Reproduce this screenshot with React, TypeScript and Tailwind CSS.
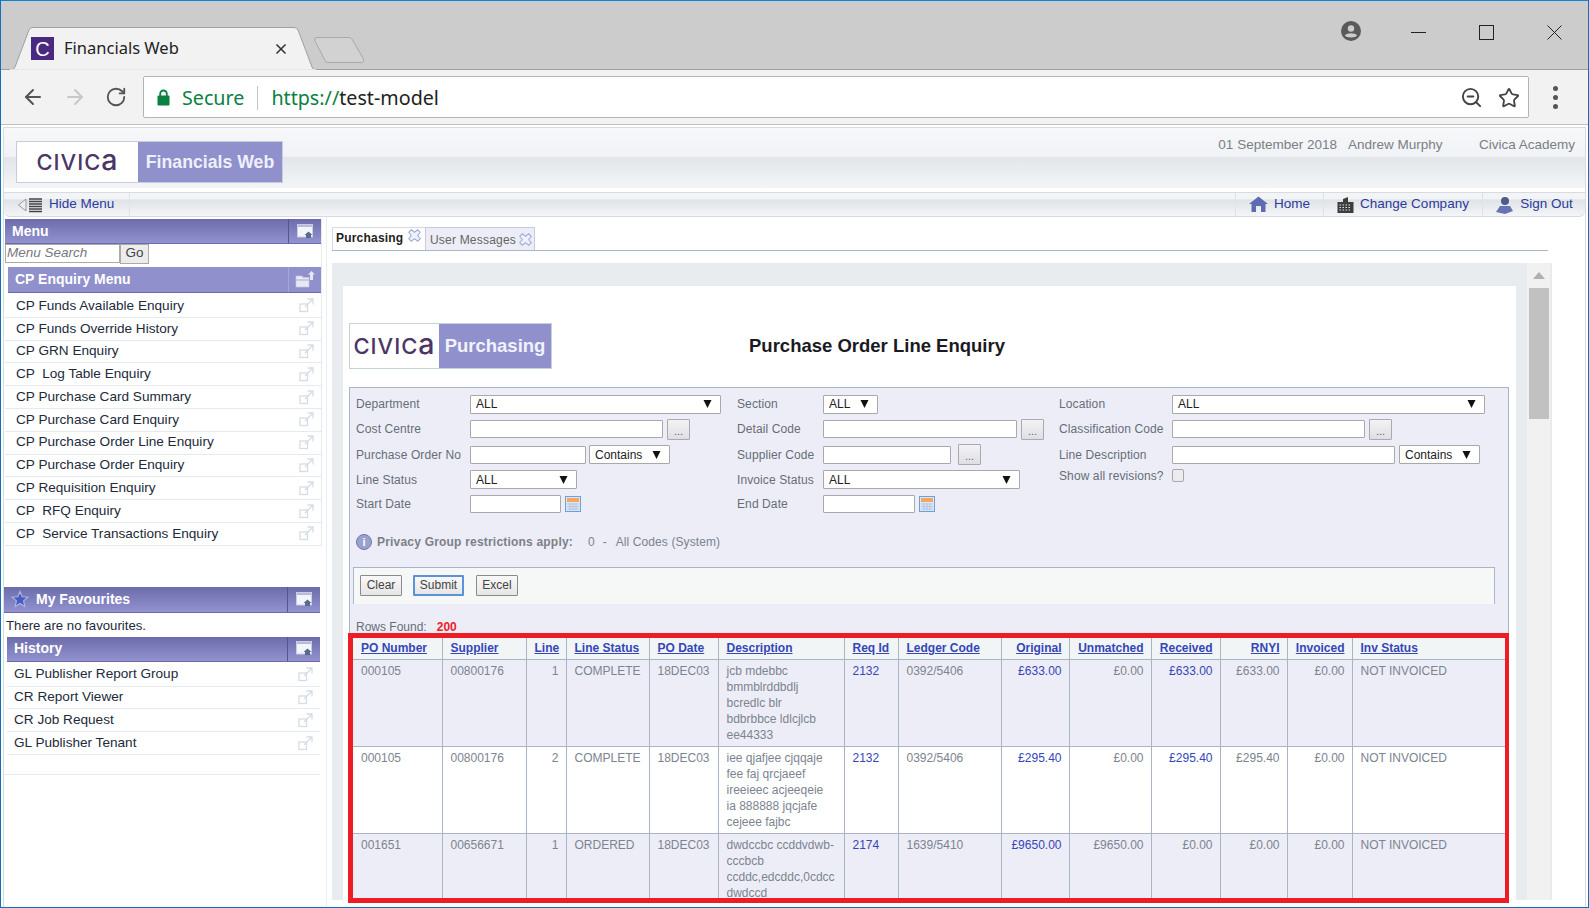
import { ArrowLeft, ArrowRight, RotateCw, Star, ZoomOut, X } from 'lucide-react';

const ENQUIRY_MENU = [
  'CP Funds Available Enquiry',
  'CP Funds Override History',
  'CP GRN Enquiry',
  'CP  Log Table Enquiry',
  'CP Purchase Card Summary',
  'CP Purchase Card Enquiry',
  'CP Purchase Order Line Enquiry',
  'CP Purchase Order Enquiry',
  'CP Requisition Enquiry',
  'CP  RFQ Enquiry',
  'CP  Service Transactions Enquiry',
];

const HISTORY_MENU = ['GL Publisher Report Group', 'CR Report Viewer', 'CR Job Request', 'GL Publisher Tenant'];

interface Column {
  label: string;
  width: string;
  right?: boolean;
}

const COLUMNS: Column[] = [
  { label: 'PO Number', width: 'w-[89px]' },
  { label: 'Supplier', width: 'w-[84px]' },
  { label: 'Line', width: 'w-[40px]', right: true },
  { label: 'Line Status', width: 'w-[83px]' },
  { label: 'PO Date', width: 'w-[69px]' },
  { label: 'Description', width: 'w-[126px]' },
  { label: 'Req Id', width: 'w-[54px]' },
  { label: 'Ledger Code', width: 'w-[103px]' },
  { label: 'Original', width: 'w-[68px]', right: true },
  { label: 'Unmatched', width: 'w-[82px]', right: true },
  { label: 'Received', width: 'w-[69px]', right: true },
  { label: 'RNYI', width: 'w-[67px]', right: true },
  { label: 'Invoiced', width: 'w-[65px]', right: true },
  { label: 'Inv Status', width: 'w-[153px]' },
];

const ROWS = [
  {
    po: '000105', supplier: '00800176', line: '1', status: 'COMPLETE', date: '18DEC03',
    desc: ['jcb mdebbc', 'bmmblrddbdlj', 'bcredlc blr', 'bdbrbbce ldlcjlcb', 'ee44333'],
    req: '2132', ledger: '0392/5406', original: '£633.00', unmatched: '£0.00', received: '£633.00', rnyi: '£633.00', invoiced: '£0.00',
  },
  {
    po: '000105', supplier: '00800176', line: '2', status: 'COMPLETE', date: '18DEC03',
    desc: ['iee qjafjee cjqqaje', 'fee faj qrcjaeef', 'ireeieec acjeeqeie', 'ia 888888 jqcjafe', 'cejeee fajbc'],
    req: '2132', ledger: '0392/5406', original: '£295.40', unmatched: '£0.00', received: '£295.40', rnyi: '£295.40', invoiced: '£0.00',
  },
  {
    po: '001651', supplier: '00656671', line: '1', status: 'ORDERED', date: '18DEC03',
    desc: ['dwdccbc ccddvdwb-', 'cccbcb', 'ccddc,edcddc,0cdcc', 'dwdccd'],
    req: '2174', ledger: '1639/5410', original: '£9650.00', unmatched: '£9650.00', received: '£0.00', rnyi: '£0.00', invoiced: '£0.00',
  },
];

function ExternalIcon() {
  return (
    <svg width="15" height="15" viewBox="0 0 15 15" fill="none" stroke="#d6dce6" strokeWidth="1.3" className="shrink-0">
      <rect x="1" y="6" width="7.5" height="7.5" />
      <path d="M6 9 L13.5 1.5 M8.5 1 H14 V6.5" />
    </svg>
  );
}

function PanelIcon() {
  return (
    <svg width="17" height="15" viewBox="0 0 17 15">
      <rect x="0.5" y="0.5" width="15" height="12.5" fill="#f4f5fa" stroke="#c9cce2" />
      <rect x="1" y="1" width="14" height="2" fill="#b9bcd8" />
      <path d="M9 14 V11 H7.5 L11.5 7.5 L15.5 11 H14 V14 Z" fill="#5b6a8c" />
    </svg>
  );
}

function FolderUpIcon() {
  return (
    <svg width="20" height="17" viewBox="0 0 20 17">
      <path d="M1 5 H7 L8 6.5 H14 V16 H1 Z" fill="#e6e8f4" stroke="#c5c8e2" strokeWidth="0.7" />
      <path d="M1 9 H14" stroke="#a9abd4" />
      <path d="M15 9 V3.5 H13 L16.5 0 L20 3.5 H18 V9 Z" fill="#e6e8f4" />
    </svg>
  );
}

function PanelHeader({ title, light, star, className }: { title: string; light?: boolean; star?: boolean; className: string }) {
  return (
    <div
      className={`flex items-center border-b border-[#6b6bab] text-[14px] font-bold text-white ${
        light ? 'bg-[#9090cc]' : 'bg-[linear-gradient(#6c6cac,#9292cf)]'
      } ${className}`}
    >
      {star && (
        <svg width="18" height="18" viewBox="0 0 24 24" fill="#4a5cc0" stroke="#a9b4e4" strokeWidth="1.6" className="ml-[7px] mr-[7px]">
          <path d="M12 2 L15 9 L22.5 9.6 L16.8 14.5 L18.6 22 L12 18 L5.4 22 L7.2 14.5 L1.5 9.6 L9 9 Z" />
        </svg>
      )}
      <span className={`flex-1 ${star ? '' : 'pl-[7px]'}`}>{title}</span>
      <div className={`flex h-full w-[33px] items-center justify-center border-l ${light ? 'border-[#a5a5d6]' : 'border-[#55558f]'}`}>
        {light ? <FolderUpIcon /> : <PanelIcon />}
      </div>
    </div>
  );
}

function MenuRow({ label, inset }: { label: string; inset: string }) {
  return (
    <div className={`flex h-[22.8px] items-center justify-between border-b border-[#e6eaee] pr-[7px] text-[13.6px] whitespace-pre text-[#222a3a] ${inset}`}>
      <span>{label}</span>
      <ExternalIcon />
    </div>
  );
}

function CivicaMark({ size }: { size: string }) {
  return (
    <span className={`font-['Inter','Noto_Sans',sans-serif] font-medium tracking-[1px] text-[#4b3566] ${size}`}>
      CIVIC<span className="text-[1.3em] leading-none">a</span>
    </span>
  );
}

function Select({ value, width }: { value: string; width: string }) {
  return (
    <div className={`flex h-[19px] items-center justify-between rounded-[1px] border border-[#a9a9a9] bg-white pl-[5px] pr-[8px] text-[12px] text-[#222] ${width}`}>
      <span>{value}</span>
      <svg width="9" height="8" viewBox="0 0 9 8"><path d="M0.5 0 H8.5 L4.5 8 Z" fill="#111" /></svg>
    </div>
  );
}

function TextBox({ width }: { width: string }) {
  return <div className={`h-[18px] rounded-[1px] border border-[#a9a9a9] bg-white ${width}`} />;
}

function LookupButton() {
  return (
    <div className="ml-[4px] flex h-[21px] w-[23px] items-end justify-center rounded-[1px] border border-[#aaa] bg-[linear-gradient(#f3f3f6,#dedee4)] pb-[1px] text-[11px] leading-[14px] text-[#666]">
      ...
    </div>
  );
}

function CalendarIcon() {
  return (
    <svg width="16" height="16" viewBox="0 0 16 16" className="ml-[4px]">
      <rect x="0.5" y="0.5" width="15" height="15" fill="#dbe7f6" stroke="#6f9fd8" />
      <rect x="2" y="2" width="12" height="4" fill="#f5a65b" />
      <path d="M2 8 H14 M2 10.5 H14 M2 13 H14 M5 7 V14.5 M8 7 V14.5 M11 7 V14.5" stroke="#a8bcd8" strokeWidth="0.7" />
    </svg>
  );
}

function FormRow({ height, children }: { height: string; children: React.ReactNode }) {
  return <div className={`flex items-center ${height}`}>{children}</div>;
}

function Field({ label, labelWidth, width, children }: { label: string; labelWidth: string; width: string; children?: React.ReactNode }) {
  return (
    <div className={`flex items-center ${width}`}>
      <span className={`shrink-0 text-[12px] tracking-[0.1px] text-[#666d78] ${labelWidth}`}>{label}</span>
      {children}
    </div>
  );
}

function ActionButton({ label, focused }: { label: string; focused?: boolean }) {
  return (
    <div
      className={`flex h-[21px] items-center justify-center rounded-[1px] border bg-[linear-gradient(#f8f8f8,#e6e6e6)] text-[12px] text-[#444] ${
        focused ? 'w-[51px] border-2 border-[#5b93d8]' : 'border-[#8a8a8a]'
      } ${label === 'Clear' ? 'w-[42px]' : ''} ${label === 'Excel' ? 'w-[42px]' : ''}`}
    >
      {label}
    </div>
  );
}

function NavLink({ label, icon, width }: { label: string; icon: React.ReactNode; width: string }) {
  return (
    <div className={`flex h-full items-center justify-center gap-[6px] border-l border-[#dfe3e8] text-[13.5px] text-[#2b3a9c] ${width}`}>
      {icon}
      <span>{label}</span>
    </div>
  );
}

function CloseCross() {
  return (
    <svg width="13" height="13" viewBox="0 0 12 12" fill="#eef0fa" stroke="#a6acd8" strokeWidth="1">
      <path d="M3 0.7 L6 3 L9 0.7 L11.3 3 L9 6 L11.3 9 L9 11.3 L6 9 L3 11.3 L0.7 9 L3 6 L0.7 3 Z" />
    </svg>
  );
}

export default function App() {
  return (
    <div className="flex h-[908px] w-[1589px] flex-col overflow-hidden border-x border-[#1170b8] bg-white font-['Liberation_Sans',Arial,sans-serif]">
      <div className="h-[1px] shrink-0 bg-[#1083d8]" />

      {/* browser tab strip */}
      <div className="flex h-[69px] shrink-0 items-end border-b border-[#a0a0a0] bg-[#cccccc]">
        <div className="relative z-10 mb-[-1px] ml-[8px] flex h-[43px] w-[308px] items-center pl-[22px] pr-[28px]">
          <svg width="308" height="43" viewBox="0 0 308 43" className="absolute left-0 top-0">
            <path d="M0 42.5 H3 Q5 42.5 6 40 L20 3 Q21 0.5 24 0.5 H285 Q288 0.5 289 3 L303 40 Q304 42.5 306 42.5 H308 V43 H0 Z" fill="#f2f2f2" stroke="#a0a0a0" />
            <path d="M1 43 H307" stroke="#f2f2f2" strokeWidth="1.5" />
          </svg>
          <div className="relative flex h-[23px] w-[23px] items-center justify-center bg-[#4a2a80] text-[20px] leading-none text-white">C</div>
          <span className="relative ml-[10px] flex-1 font-['Noto_Sans',sans-serif] text-[16.5px] text-[#222]">Financials Web</span>
          <X size={16} strokeWidth={2.5} className="relative text-[#333]" />
        </div>
        <svg width="52" height="26" viewBox="0 0 52 26" className="mb-[6px] ml-[-4px]">
          <path d="M1.5 3 Q1 0.5 4 0.5 H36 Q38 0.5 39 2 L50.5 22 Q51.5 25.5 48 25.5 H15 Q13 25.5 12 23.5 Z" fill="#d2d2d2" stroke="#a8a8a8" />
        </svg>
        <div className="mb-[26px] ml-auto flex items-center text-[#333]">
          <svg width="20" height="20" viewBox="0 0 20 20" className="mb-[2px] mr-[50px]">
            <circle cx="10" cy="10" r="10" fill="#5a5a5a" />
            <circle cx="10" cy="7.5" r="3.2" fill="#cccccc" />
            <path d="M3.8 14.5 C6 11.6 14 11.6 16.2 14.5 C14.5 17 5.5 17 3.8 14.5 Z" fill="#cccccc" />
          </svg>
          <div className="mr-[53px] h-[1px] w-[15px] bg-[#222]" />
          <div className="mr-[53px] h-[15px] w-[15px] border border-[#222]" />
          <svg width="15" height="15" viewBox="0 0 15 15" stroke="#222" className="mr-[26px]"><path d="M0.5 0.5 L14.5 14.5 M14.5 0.5 L0.5 14.5" /></svg>
        </div>
      </div>

      {/* browser toolbar */}
      <div className="flex h-[55px] shrink-0 items-center border-b border-[#c0c0c0] bg-[#f2f2f2] text-[#555]">
        <ArrowLeft size={24} strokeWidth={2} className="ml-[20px]" />
        <ArrowRight size={24} strokeWidth={2} className="ml-[18px] text-[#c8c8c8]" />
        <RotateCw size={22} strokeWidth={2} className="ml-[18px]" />
        <div className="ml-[16px] flex h-[42px] w-[1386px] items-center rounded-[2px] border border-[#b4b4b4] bg-white pl-[13px] pr-[8px] pt-[1px] font-['Noto_Sans',sans-serif] text-[19.7px]">
          <svg width="13" height="17" viewBox="0 0 13 17">
            <path d="M3.2 8 V4.8 a3.3 3.3 0 0 1 6.6 0 V8" fill="none" stroke="#0b8043" strokeWidth="1.8" />
            <rect x="0.5" y="6.5" width="12" height="10" rx="1" fill="#0b8043" />
          </svg>
          <span className="ml-[12px] text-[#0b8043]">Secure</span>
          <div className="mx-[13px] h-[24px] w-[1px] bg-[#c4c4c4]" />
          <span className="text-[#0b8043]">https://</span>
          <span className="text-[#222]">test-model</span>
          <ZoomOut size={23} strokeWidth={2} className="ml-auto text-[#444]" />
          <Star size={22} strokeWidth={2} className="ml-[15px] text-[#444]" />
        </div>
        <div className="ml-[24px] flex flex-col gap-[4px]">
          <div className="h-[5px] w-[5px] rounded-full bg-[#555]" />
          <div className="h-[5px] w-[5px] rounded-full bg-[#555]" />
          <div className="h-[5px] w-[5px] rounded-full bg-[#555]" />
        </div>
      </div>

      {/* application */}
      <div className="mx-[2px] mt-[2px] flex flex-1 flex-col border-x border-t border-[#d5dbe0]">
        <div className="flex h-[60px] shrink-0 items-start justify-between bg-[linear-gradient(#f6f8fa_0%,#f0f2f5_48%,#e2e6ea_49%,#f3f5f7_100%)] pl-[12px] pr-[10px]">
          <div className="mt-[13px] flex h-[42px] w-[267px] border border-[#c8ccdc]">
            <div className="flex w-[121px] items-center justify-center bg-white"><CivicaMark size="text-[22px]" /></div>
            <div className="flex flex-1 items-center justify-center bg-[#9090cc] text-[17.7px] font-bold text-[#eef0fa]">Financials Web</div>
          </div>
          <div className="mt-[7px] flex text-[13.5px] text-[#7a7f86]">
            <span>01 September 2018</span>
            <span className="ml-[11px] w-[131px]">Andrew Murphy</span>
            <span>Civica Academy</span>
          </div>
        </div>

        <div className="mt-[4px] flex h-[25px] shrink-0 items-center justify-between rounded-b-[6px] border-y border-[#d5dbe0] bg-[linear-gradient(#f2f4f6_0%,#f2f4f6_25%,#dfe3e7_30%,#f4f5f7_100%)]">
          <div className="flex h-full w-[126px] items-center border-r border-[#dfe3e8] pl-[14px] text-[13.5px] text-[#2b3a9c]">
            <svg width="25" height="16" viewBox="0 0 25 16" className="mr-[6px]">
              <path d="M0.5 8 L8 2 V14 Z" fill="#eee" stroke="#999" />
              <path d="M11 2 H24 M11 4.5 H24 M11 7 H24 M11 9.5 H24 M11 12 H24 M11 14.5 H24" stroke="#444" strokeWidth="1.4" />
            </svg>
            Hide Menu
          </div>
          <div className="flex h-full">
            <NavLink
              label="Home"
              width="w-[88px]"
              icon={
                <svg width="19" height="17" viewBox="0 0 19 17">
                  <path d="M9.5 0.5 L19 8 H16.5 V16 H12 V10 H7 V16 H2.5 V8 H0 Z" fill="#5f6bb0" />
                </svg>
              }
            />
            <NavLink
              label="Change Company"
              width="w-[159px]"
              icon={
                <svg width="17" height="18" viewBox="0 0 17 18">
                  <path d="M0.5 17 V6 L6 6 V3 L11 1 V6 H16.5 V17 Z" fill="#3d3d3d" />
                  <path d="M2.5 9 H14.5 M2.5 11.5 H14.5 M2.5 14 H14.5" stroke="#e5e5e5" strokeDasharray="1.5 1.5" />
                </svg>
              }
            />
            <NavLink
              label="Sign Out"
              width="w-[103px]"
              icon={
                <svg width="19" height="18" viewBox="0 0 19 18">
                  <circle cx="10" cy="5" r="4" fill="#4d5a8c" />
                  <path d="M1 16 L5 10 H15 L18 15 L10 18 Z" fill="#6673b4" />
                </svg>
              }
            />
          </div>
        </div>

        <div className="flex flex-1">
          {/* left menu */}
          <aside className="w-[323px] shrink-0 border-r border-[#eceff2] pt-[2px]">
            <div className="mr-[4px] border-r border-[#e6eaee] pl-[1px]">
              <PanelHeader title="Menu" className="h-[25px]" />
              <div className="flex h-[19px] items-center">
                <input
                  readOnly
                  placeholder="Menu Search"
                  className="h-[19px] w-[115px] border border-[#aaa] bg-white pl-[1px] text-[13.5px] italic outline-none placeholder:text-[#77777f]"
                />
                <div className="flex h-[20px] w-[29px] items-center justify-center border border-[#aaa] bg-[#ececec] text-[13.5px] text-[#444]">Go</div>
              </div>
              <div className="mt-[4px] pl-[3px]">
                <PanelHeader title="CP Enquiry Menu" light className="h-[26px]" />
              </div>
              <div className="pt-[2px]">
                {ENQUIRY_MENU.map((item) => (
                  <MenuRow key={item} label={item} inset="pl-[11px]" />
                ))}
              </div>
            </div>
            <div className="mr-[6px] mt-[41px]">
              <PanelHeader title="My Favourites" star className="h-[26px]" />
              <div className="flex h-[24px] items-center pl-[2px] pt-[2px] text-[13.2px] text-[#222a3a]">There are no favourites.</div>
              <div className="pl-[3px]">
                <PanelHeader title="History" className="h-[25px]" />
                <div className="pt-[2px]">
                  {HISTORY_MENU.map((item) => (
                    <MenuRow key={item} label={item} inset="pl-[7px]" />
                  ))}
                </div>
              </div>
              <div className="mt-[19px] border-b border-[#e6eaee]" />
            </div>
          </aside>

          {/* tabs and page */}
          <main className="flex-1">
            <div className="ml-[5px] mr-[39px] mt-[11px] flex h-[23px] items-end border-b border-[#a9b6c6]">
              <div className="flex h-[23px] w-[93px] items-start gap-[5px] border-l border-t border-[#d5dbe6] bg-white pl-[3px] pt-[1px] text-[12px] font-bold tracking-[0.2px] text-[#222]">
                Purchasing <CloseCross />
              </div>
              <div className="flex h-[23px] w-[110px] items-center gap-[3px] border-x border-t border-[#c5cbdc] bg-[#ededf7] pl-[4px] pt-[1px] text-[12px] tracking-[0.2px] text-[#666]">
                User Messages <CloseCross />
              </div>
            </div>

            <div className="ml-[5px] mr-[35px] mt-[12px] flex h-[637px] bg-[#e8ecee] pl-[11px] pr-[2px]">
              <div className="mt-[23px] h-[614px] w-[1173px] bg-white pl-[6px]">
                <div className="mt-[37px] flex h-[46px] items-center">
                  <div className="flex h-[46px] w-[203px] border border-[#c8d0dc]">
                    <div className="flex w-[89px] items-center justify-center bg-white"><CivicaMark size="text-[22px]" /></div>
                    <div className="flex flex-1 items-center justify-center bg-[#9090cc] text-[18.5px] font-bold text-[#f2f2fc]">Purchasing</div>
                  </div>
                  <h1 className="ml-[197px] text-[18.5px] font-bold text-[#1a1a24]">Purchase Order Line Enquiry</h1>
                </div>

                <div className="mt-[18px] h-[513px] w-[1160px] border-x border-t border-[#a8b4c8] bg-[#ededf7]">
                  <div className="pl-[6px] pt-[4px]">
                    <FormRow height="h-[24px]">
                      <Field label="Department" labelWidth="w-[114px]" width="w-[381px]"><Select value="ALL" width="w-[251px]" /></Field>
                      <Field label="Section" labelWidth="w-[86px]" width="w-[322px]"><Select value="ALL" width="w-[55px]" /></Field>
                      <Field label="Location" labelWidth="w-[113px]" width="w-[439px]"><Select value="ALL" width="w-[313px]" /></Field>
                    </FormRow>
                    <FormRow height="h-[26px]">
                      <Field label="Cost Centre" labelWidth="w-[114px]" width="w-[381px]"><TextBox width="w-[193px]" /><LookupButton /></Field>
                      <Field label="Detail Code" labelWidth="w-[86px]" width="w-[322px]"><TextBox width="w-[194px]" /><LookupButton /></Field>
                      <Field label="Classification Code" labelWidth="w-[113px]" width="w-[439px]"><TextBox width="w-[193px]" /><LookupButton /></Field>
                    </FormRow>
                    <FormRow height="h-[25px]">
                      <Field label="Purchase Order No" labelWidth="w-[114px]" width="w-[381px]"><TextBox width="w-[116px]" /><div className="ml-[3px]"><Select value="Contains" width="w-[81px]" /></div></Field>
                      <Field label="Supplier Code" labelWidth="w-[86px]" width="w-[322px]"><TextBox width="w-[128px]" /><div className="ml-[3px]"><LookupButton /></div></Field>
                      <Field label="Line Description" labelWidth="w-[113px]" width="w-[439px]"><TextBox width="w-[223px]" /><div className="ml-[4px]"><Select value="Contains" width="w-[81px]" /></div></Field>
                    </FormRow>
                    <FormRow height="h-[25px]">
                      <Field label="Line Status" labelWidth="w-[114px]" width="w-[381px]"><Select value="ALL" width="w-[107px]" /></Field>
                      <Field label="Invoice Status" labelWidth="w-[86px]" width="w-[322px]"><Select value="ALL" width="w-[197px]" /></Field>
                      <Field label="Show all revisions?" labelWidth="w-[113px]" width="mb-[8px] w-[439px]">
                        <div className="h-[13px] w-[12px] rounded-[2px] border border-[#a9a9a9] bg-[#ececf0]" />
                      </Field>
                    </FormRow>
                    <FormRow height="h-[24px]">
                      <Field label="Start Date" labelWidth="w-[114px]" width="w-[381px]"><TextBox width="w-[91px]" /><CalendarIcon /></Field>
                      <Field label="End Date" labelWidth="w-[86px]" width="w-[322px]"><TextBox width="w-[92px]" /><CalendarIcon /></Field>
                    </FormRow>
                  </div>

                  <div className="ml-[6px] mt-[18px] flex h-[16px] items-center text-[12px] text-[#7b8290]">
                    <div className="mr-[5px] flex h-[16px] w-[16px] items-center justify-center rounded-full border border-[#7078b0] bg-[#9aa2cc] text-[11px] font-bold leading-none text-white">i</div>
                    <span className="w-[211px] font-bold tracking-[0.2px] text-[#7b8088]">Privacy Group restrictions apply:</span>
                    <span>0</span>
                    <span className="ml-[8px]">-</span>
                    <span className="ml-[9px] tracking-[0.1px]">All Codes (System)</span>
                  </div>

                  <div className="ml-[3px] mt-[17px] flex h-[37px] w-[1142px] items-center border-x border-t border-[#a8b4c8] bg-[#f6f8f8] pb-[2px] pl-[6px]">
                    <ActionButton label="Clear" />
                    <div className="ml-[11px]"><ActionButton label="Submit" focused /></div>
                    <div className="ml-[12px]"><ActionButton label="Excel" /></div>
                  </div>

                  <div className="ml-[6px] mt-[16px] flex h-[14px] items-center text-[12px] text-[#666d78]">
                    Rows Found:
                    <span className="ml-[10px] font-bold text-[#ee1c25]">200</span>
                  </div>

                  <div className="ml-[-2px] mt-[-1px] h-[270px] w-[1161px] overflow-hidden border-[5px] border-r-[4px] border-[#ee1c25] bg-white">
                    <table className="w-[1152px] table-fixed border-collapse text-[12px] leading-[16px] text-[#7b8490]">
                      <thead>
                        <tr className="h-[21px] bg-[#f1f5f6]">
                          {COLUMNS.map((col) => (
                            <th
                              key={col.label}
                              className={`overflow-hidden border-b border-r border-[#a9b5c3] pl-[8px] pr-[7px] align-middle font-bold whitespace-nowrap text-[#3546b8] underline ${col.width} ${
                                col.right ? 'text-right' : 'text-left'
                              }`}
                            >
                              {col.label}
                            </th>
                          ))}
                        </tr>
                      </thead>
                      <tbody>
                        {ROWS.map((row, i) => {
                          const cell = 'border-b border-r border-[#a9b5c3] pl-[8px] pr-[7px] pb-[3px] pt-[3px] align-top';
                          return (
                            <tr key={`${row.po}-${row.line}`} className={`h-[85px] ${i % 2 === 0 ? 'bg-[#ededf7]' : 'bg-white'}`}>
                              <td className={cell}>{row.po}</td>
                              <td className={cell}>{row.supplier}</td>
                              <td className={`${cell} text-right`}>{row.line}</td>
                              <td className={cell}>{row.status}</td>
                              <td className={cell}>{row.date}</td>
                              <td className={`${cell} whitespace-nowrap`}>
                                {row.desc.map((l) => (
                                  <div key={l}>{l}</div>
                                ))}
                              </td>
                              <td className={`${cell} text-[#3546b8]`}>{row.req}</td>
                              <td className={cell}>{row.ledger}</td>
                              <td className={`${cell} text-right text-[#3546b8]`}>{row.original}</td>
                              <td className={`${cell} text-right`}>{row.unmatched}</td>
                              <td className={`${cell} text-right ${row.received === '£0.00' ? '' : 'text-[#3546b8]'}`}>{row.received}</td>
                              <td className={`${cell} text-right`}>{row.rnyi}</td>
                              <td className={`${cell} text-right`}>{row.invoiced}</td>
                              <td className={cell}>NOT INVOICED</td>
                            </tr>
                          );
                        })}
                      </tbody>
                    </table>
                  </div>
                </div>
              </div>

              <div className="ml-[11px] flex w-[23px] flex-col items-center bg-[#f1f1f1] pt-[9px]">
                <div className="h-0 w-0 border-x-[6px] border-b-[7px] border-x-transparent border-b-[#b0b0b0]" />
                <div className="mt-[9px] h-[131px] w-[20px] bg-[#c1c1c1]" />
              </div>
            </div>
          </main>
        </div>
      </div>
      <div className="h-[1px] shrink-0 bg-[#1170b8]" />
    </div>
  );
}
